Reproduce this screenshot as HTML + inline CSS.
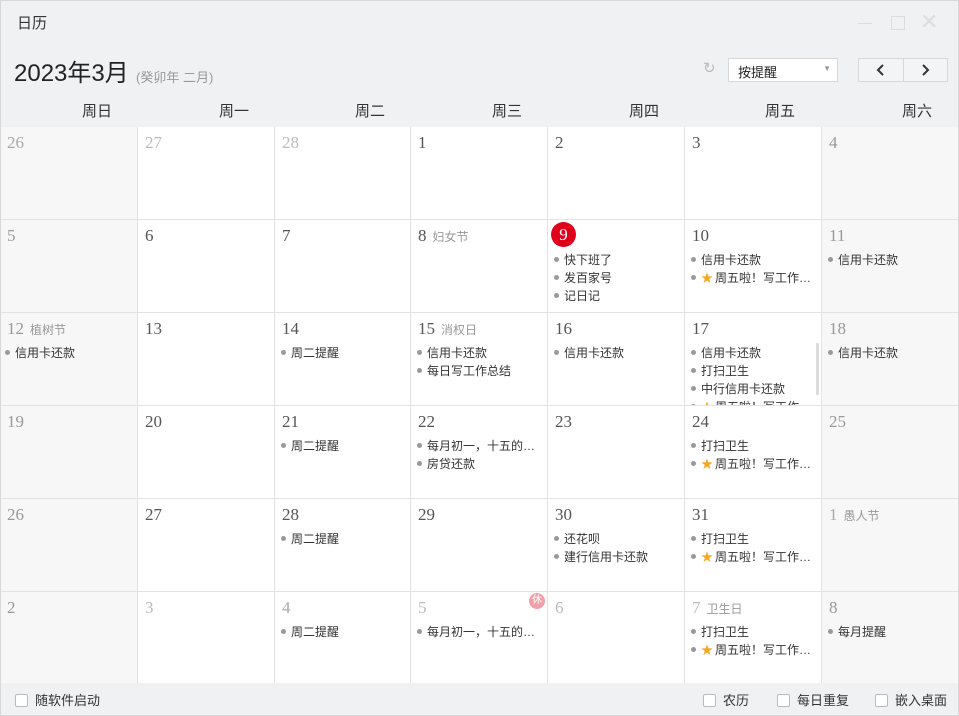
<!DOCTYPE html>
<html><head><meta charset="utf-8"><style>
*{margin:0;padding:0;box-sizing:border-box}
body{width:959px;height:716px;background:#f0f1f3;font-family:"Liberation Sans","Noto Sans CJK SC",sans-serif;position:relative;overflow:hidden}
.a{position:absolute}
.c{position:absolute;height:93px;border-right:1px solid #e3e3e3;border-bottom:1px solid #e3e3e3;background:#fff}
.w{background:#f7f7f8}
.n{position:absolute;left:7px;top:6px;font-family:"Liberation Serif","Noto Serif CJK SC",serif;font-size:17px;color:#555}
.d{color:#aaa}
.wk{color:#999}
.h{font-family:"Liberation Sans","Noto Sans CJK SC",sans-serif;font-size:12px;color:#999;margin-left:6px}
.ev{position:absolute;left:6px;top:31px;font-size:12px;color:#333;line-height:18px;white-space:nowrap}
.ev div:before{content:"";display:inline-block;width:5px;height:5px;border-radius:50%;background:#999;margin-right:5px;vertical-align:middle;position:relative;top:-1px}
.st{color:#f5a623;font-size:12px;margin-right:2px}
.wd{position:absolute;top:100px;font-size:15px;color:#333}
.cb{display:inline-block;width:13px;height:13px;border:1px solid #bbb;background:#fff;border-radius:2px;vertical-align:middle;margin-right:7px;position:relative;top:-1px}
.ft{position:absolute;top:690px;font-size:13px;color:#333}
</style></head><body>
<div class="a" style="left:0;top:0;width:959px;height:716px;border:1px solid #d8d8d8;z-index:5;pointer-events:none"></div>
<div class="a" style="left:17px;top:12px;font-size:15px;color:#333">日历</div>
<div class="a" style="left:858px;top:23px;width:14px;height:1px;background:#ddd"></div>
<div class="a" style="left:891px;top:16px;width:14px;height:14px;border:1px solid #ddd"></div>
<div class="a" style="left:920px;top:10px;font-size:22px;color:#ddd;line-height:24px">✕</div>
<div class="a" style="left:14px;top:53px;font-size:24px;color:#222">2023年3月</div>
<div class="a" style="left:136px;top:67px;font-size:13px;color:#999">(癸卯年 二月)</div>
<div class="a" style="left:703px;top:59px;font-size:15px;color:#bbb">↻</div>
<div class="a" style="left:728px;top:58px;width:110px;height:24px;border:1px solid #d8d8d8;background:#fff;font-size:13px;color:#222;padding:3px 0 0 9px">按提醒<span style="position:absolute;right:6px;top:5px;font-size:8px;color:#999">▼</span></div>
<div class="a" style="left:858px;top:58px;width:90px;height:24px;border:1px solid #d8d8d8;background:#f3f4f6"></div>
<div class="a" style="left:903px;top:58px;width:1px;height:24px;background:#d8d8d8"></div>
<svg class="a" style="left:875px;top:63px" width="12" height="14"><path d="M8 2L3 7l5 5" stroke="#333" stroke-width="2" fill="none"/></svg>
<svg class="a" style="left:919px;top:63px" width="12" height="14"><path d="M4 2l5 5-5 5" stroke="#333" stroke-width="2" fill="none"/></svg>
<div class="wd" style="left:82px">周日</div><div class="wd" style="left:219px">周一</div><div class="wd" style="left:355px">周二</div><div class="wd" style="left:492px">周三</div><div class="wd" style="left:629px">周四</div><div class="wd" style="left:765px">周五</div><div class="wd" style="left:902px">周六</div>

<!-- row1 -->
<div class="c w" style="left:0px;top:127px;width:138px"><span class="n d">26</span></div>
<div class="c" style="left:138px;top:127px;width:137px"><span class="n d" style="color:#bbb">27</span></div>
<div class="c" style="left:275px;top:127px;width:136px"><span class="n d" style="color:#bbb">28</span></div>
<div class="c" style="left:411px;top:127px;width:137px"><span class="n">1</span></div>
<div class="c" style="left:548px;top:127px;width:137px"><span class="n">2</span></div>
<div class="c" style="left:685px;top:127px;width:137px"><span class="n">3</span></div>
<div class="c w" style="left:822px;top:127px;width:137px;border-right:0"><span class="n wk">4</span></div>
<!-- row2 -->
<div class="c w" style="left:0px;top:220px;width:138px"><span class="n wk">5</span></div>
<div class="c" style="left:138px;top:220px;width:137px"><span class="n">6</span></div>
<div class="c" style="left:275px;top:220px;width:136px"><span class="n">7</span></div>
<div class="c" style="left:411px;top:220px;width:137px"><span class="n">8<span class="h">妇女节</span></span></div>
<div class="c" style="left:548px;top:220px;width:137px"><span class="a" style="left:3px;top:2px;width:25px;height:25px;border-radius:50%;background:#e0001b;color:#fff;font-family:'Liberation Serif',serif;font-size:17px;text-align:center;line-height:25px">9</span><div class="ev"><div>快下班了</div><div>发百家号</div><div>记日记</div></div></div>
<div class="c" style="left:685px;top:220px;width:137px"><span class="n">10</span><div class="ev"><div>信用卡还款</div><div><span class="st">★</span>周五啦！写工作…</div></div></div>
<div class="c w" style="left:822px;top:220px;width:137px;border-right:0"><span class="n wk">11</span><div class="ev"><div>信用卡还款</div></div></div>
<!-- row3 -->
<div class="c w" style="left:0px;top:313px;width:138px"><span class="n wk">12<span class="h">植树节</span></span><div class="ev" style="left:5px"><div>信用卡还款</div></div></div>
<div class="c" style="left:138px;top:313px;width:137px"><span class="n">13</span></div>
<div class="c" style="left:275px;top:313px;width:136px"><span class="n">14</span><div class="ev"><div>周二提醒</div></div></div>
<div class="c" style="left:411px;top:313px;width:137px"><span class="n">15<span class="h">消权日</span></span><div class="ev"><div>信用卡还款</div><div>每日写工作总结</div></div></div>
<div class="c" style="left:548px;top:313px;width:137px"><span class="n">16</span><div class="ev"><div>信用卡还款</div></div></div>
<div class="c" style="left:685px;top:313px;width:137px;overflow:hidden"><span class="n">17</span><div class="ev"><div>信用卡还款</div><div>打扫卫生</div><div>中行信用卡还款</div><div><span class="st">★</span>周五啦！写工作…</div></div><div class="a" style="left:131px;top:30px;width:3px;height:52px;background:#ddd"></div></div>
<div class="c w" style="left:822px;top:313px;width:137px;border-right:0"><span class="n wk">18</span><div class="ev"><div>信用卡还款</div></div></div>
<!-- row4 -->
<div class="c w" style="left:0px;top:406px;width:138px"><span class="n wk">19</span></div>
<div class="c" style="left:138px;top:406px;width:137px"><span class="n">20</span></div>
<div class="c" style="left:275px;top:406px;width:136px"><span class="n">21</span><div class="ev"><div>周二提醒</div></div></div>
<div class="c" style="left:411px;top:406px;width:137px"><span class="n">22</span><div class="ev"><div>每月初一，十五的…</div><div>房贷还款</div></div></div>
<div class="c" style="left:548px;top:406px;width:137px"><span class="n">23</span></div>
<div class="c" style="left:685px;top:406px;width:137px"><span class="n">24</span><div class="ev"><div>打扫卫生</div><div><span class="st">★</span>周五啦！写工作…</div></div></div>
<div class="c w" style="left:822px;top:406px;width:137px;border-right:0"><span class="n wk">25</span></div>
<!-- row5 -->
<div class="c w" style="left:0px;top:499px;width:138px"><span class="n wk">26</span></div>
<div class="c" style="left:138px;top:499px;width:137px"><span class="n">27</span></div>
<div class="c" style="left:275px;top:499px;width:136px"><span class="n">28</span><div class="ev"><div>周二提醒</div></div></div>
<div class="c" style="left:411px;top:499px;width:137px"><span class="n">29</span></div>
<div class="c" style="left:548px;top:499px;width:137px"><span class="n">30</span><div class="ev"><div>还花呗</div><div>建行信用卡还款</div></div></div>
<div class="c" style="left:685px;top:499px;width:137px"><span class="n">31</span><div class="ev"><div>打扫卫生</div><div><span class="st">★</span>周五啦！写工作…</div></div></div>
<div class="c w" style="left:822px;top:499px;width:137px;border-right:0"><span class="n d">1<span class="h">愚人节</span></span></div>
<!-- row6 -->
<div class="c w" style="left:0px;top:592px;width:138px;height:91px;border-bottom:0"><span class="n wk">2</span></div>
<div class="c" style="left:138px;top:592px;width:137px;height:91px;border-bottom:0"><span class="n d" style="color:#bbb">3</span></div>
<div class="c" style="left:275px;top:592px;width:136px;height:91px;border-bottom:0"><span class="n d">4</span><div class="ev"><div>周二提醒</div></div></div>
<div class="c" style="left:411px;top:592px;width:137px;height:91px;border-bottom:0"><span class="n d" style="color:#bbb">5</span><span class="a" style="left:118px;top:1px;width:16px;height:16px;border-radius:50%;background:#f0a0a8;color:#fff;font-size:10px;text-align:center;line-height:16px">休</span><div class="ev"><div>每月初一，十五的…</div></div></div>
<div class="c" style="left:548px;top:592px;width:137px;height:91px;border-bottom:0"><span class="n d" style="color:#bbb">6</span></div>
<div class="c" style="left:685px;top:592px;width:137px;height:91px;border-bottom:0"><span class="n d" style="color:#bbb">7<span class="h">卫生日</span></span><div class="ev"><div>打扫卫生</div><div><span class="st">★</span>周五啦！写工作…</div></div></div>
<div class="c w" style="left:822px;top:592px;width:137px;height:91px;border-bottom:0;border-right:0"><span class="n wk">8</span><div class="ev"><div>每月提醒</div></div></div>

<div class="ft" style="left:15px"><span class="cb"></span>随软件启动</div>
<div class="ft" style="left:703px"><span class="cb"></span>农历</div>
<div class="ft" style="left:777px"><span class="cb"></span>每日重复</div>
<div class="ft" style="left:875px"><span class="cb"></span>嵌入桌面</div>
</body></html>
